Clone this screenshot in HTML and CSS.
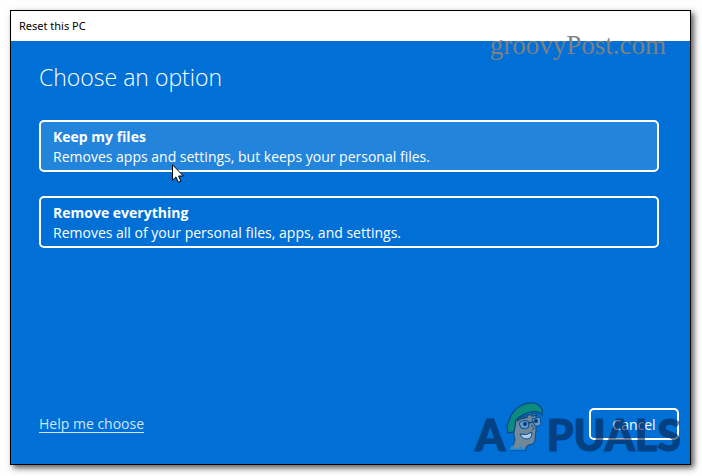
FILE: index.html
```html
<!DOCTYPE html>
<html lang="en">
<head>
    <meta charset="UTF-8">
    <meta name="viewport" content="width=device-width, initial-scale=1.0">
    <title>Reset this PC</title>
    <link rel="stylesheet" href="styles.css">
</head>
<body>
    <div class="window">
        <header class="title-bar">Reset this PC</header>

        <main class="content">
            <h1>Choose an option</h1>

            <div class="options">
                <button type="button" class="option active">
                    <strong>Keep my files</strong>
                    <span>Removes apps and settings, but keeps your personal files.</span>
                </button>
                <button type="button" class="option">
                    <strong>Remove everything</strong>
                    <span>Removes all of your personal files, apps, and settings.</span>
                </button>
            </div>

            <footer class="footer">
                <a href="#" class="help-link">Help me choose</a>
                <button type="button" class="cancel-btn">Cancel</button>
            </footer>
        </main>

        <div class="site-mark">groovyPost.com</div>

        <div class="brand-mark">
            <span>A</span>
            <svg class="face" viewBox="0 0 38 50">
                <path d="M7 28 L9 39 Q8 44 4 49 L20 49 Q19 45 23 44 Q29 43 29 38 L30 30 L30 12 L10 18 Z" fill="#70899a" stroke="#0b4b86" stroke-width="1"/>
                <path d="M3 49 L6 44 L10 49 L15 45 L19 49 Z" fill="#2589d8"/>
                <path d="M1 25 L3 20 Q5 10 16 4 Q30 -2 36 8 L36 14 Q32 9 25 11 Q16 13 10 19 L8 31 L2 32 Z" fill="#0a8c80" stroke="#0b4b86" stroke-width="1.4"/>
                <path d="M13 22 Q17 18 22 20 L23 26 Q20 29 15 27 Z" fill="#5f9bd0" stroke="#0b4b86"/>
                <path d="M26 18 L34 16 L35 23 Q33 26 29 25 Z" fill="#5f9bd0" stroke="#0b4b86"/>
                <path d="M11 20 L14 18 L22 16 M25 15 L32 14 M22 22 L27 21" fill="none" stroke="#0b4b86" stroke-width="1.6"/>
                <circle cx="19" cy="23" r="2" fill="#073b75"/>
                <circle cx="30" cy="20" r="2" fill="#073b75"/>
                <path d="M25 24 Q30 27 26 29" fill="none" stroke="#0b4b86"/>
                <path d="M14 33 Q21 35 26 31 Q26 38 21 38 Q16 38 14 33 Z" fill="#a8cdf0" stroke="#0b4b86"/>
            </svg>
            <span>PUALS</span>
        </div>

        <svg class="cursor" viewBox="0 0 12 19">
            <path d="M.5 .8 V16.2 L4 12.9 L6.3 18.3 L8.9 17.2 L6.6 12 H11.4 Z" fill="#fff" stroke="#000"/>
        </svg>
    </div>
</body>
</html>
```

FILE: styles.css
```css
* {
    margin: 0;
    padding: 0;
    box-sizing: border-box;
}

body {
    font-family: 'Open Sans', 'Noto Sans', sans-serif;
    background: #fefefe;
    min-height: 100vh;
    display: flex;
    padding: 10px 11px 11px 10px;
}

.window {
    position: relative;
    flex: 1;
    display: flex;
    flex-direction: column;
    border: 1px solid #000;
    background: #0070d7;
    box-shadow: 3px 3px 6px rgba(0, 0, 0, 0.65);
}

.title-bar {
    padding: 0 8px;
    background: #fff;
    color: #000;
    font-family: 'Noto Sans', sans-serif;
    font-size: 11px;
    line-height: 30px;
}

.content {
    flex: 1;
    display: flex;
    flex-direction: column;
    padding: 19px 11px 24px 28px;
    color: #fff;
}

h1 {
    font-size: 23px;
    font-weight: 300;
    line-height: 34px;
    margin-bottom: 26px;
}

.options {
    display: flex;
    flex-direction: column;
    gap: 24px;
    margin-right: 20px;
}

.option {
    display: flex;
    flex-direction: column;
    padding: 5px 12px 3px;
    border: 2px solid #fff;
    border-radius: 5px;
    background: transparent;
    color: #fff;
    font-family: inherit;
    font-size: 14px;
    line-height: 20px;
    text-align: left;
    cursor: pointer;
}

.option.active,
.option:hover {
    background: #2384dc;
}

.footer {
    display: flex;
    justify-content: space-between;
    align-items: center;
    margin-top: auto;
}

.help-link {
    color: #cfe6fb;
    border-bottom: 1px solid #cfe6fb;
    font-size: 14px;
    line-height: 16px;
    text-decoration: none;
}

.cancel-btn {
    width: 90px;
    height: 32px;
    border: 2px solid #fff;
    border-radius: 5px;
    background: transparent;
    color: #fff;
    font-family: inherit;
    font-size: 14px;
    cursor: pointer;
}

/* Watermarks and pointer sit over the dialog */
.site-mark {
    position: absolute;
    top: 18px;
    right: 24px;
    color: #808080;
    font-family: 'Liberation Serif', serif;
    font-size: 27px;
    line-height: 32px;
    pointer-events: none;
}

.brand-mark {
    position: absolute;
    right: 9px;
    bottom: 9px;
    display: flex;
    align-items: flex-end;
    color: #05234b;
    font-family: Lato, sans-serif;
    font-size: 43px;
    font-weight: 900;
    line-height: 41px;
    pointer-events: none;
}

.brand-mark span {
    opacity: 0.6;
    -webkit-text-stroke: 1px #05234b;
    stroke-linejoin: round;
}

.face {
    width: 38px;
    height: 50px;
    margin: 0 2px 4px 1px;
}

.cursor {
    position: absolute;
    top: 153px;
    left: 161px;
    width: 12px;
    height: 19px;
    pointer-events: none;
}
```
